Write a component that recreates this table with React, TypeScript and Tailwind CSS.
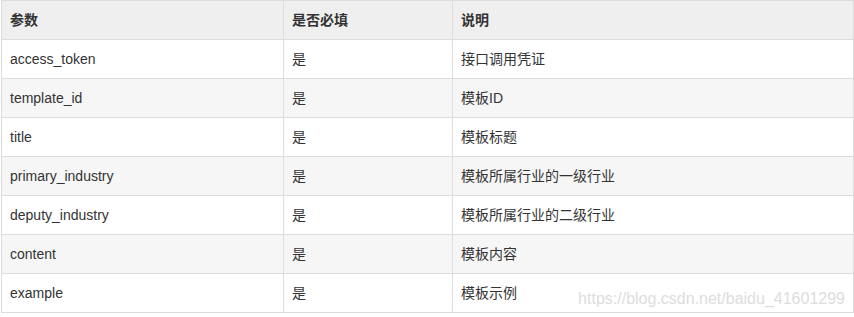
const rows = [
  { name: "access_token", required: "是", desc: "接口调用凭证" },
  { name: "template_id", required: "是", desc: "模板ID" },
  { name: "title", required: "是", desc: "模板标题" },
  { name: "primary_industry", required: "是", desc: "模板所属行业的一级行业" },
  { name: "deputy_industry", required: "是", desc: "模板所属行业的二级行业" },
  { name: "content", required: "是", desc: "模板内容" },
  { name: "example", required: "是", desc: "模板示例" },
];

export default function App() {
  return (
    <div
      className="relative h-[317px] w-[854px] bg-white pl-px text-[14px] text-[#333]"
      style={{ fontFamily: '"Liberation Sans", "Noto Sans CJK SC", sans-serif' }}
    >
      <table className="w-[852px] table-fixed border-collapse">
        <colgroup>
          <col className="w-[282px]" />
          <col className="w-[169px]" />
          <col className="w-[401px]" />
        </colgroup>
        <thead>
          <tr className="bg-[#efefef]">
            <th className="h-[39px] border border-[#ddd] px-[8px] text-left font-bold">参数</th>
            <th className="h-[39px] border border-[#ddd] px-[8px] text-left font-bold">是否必填</th>
            <th className="h-[39px] border border-[#ddd] px-[8px] text-left font-bold">说明</th>
          </tr>
        </thead>
        <tbody>
          {rows.map((r, i) => (
            <tr key={r.name} className={i % 2 === 0 ? "bg-white" : "bg-[#f6f6f6]"}>
              <td className="h-[39px] border border-[#ddd] px-[8px]">{r.name}</td>
              <td className="h-[39px] border border-[#ddd] px-[8px]">{r.required}</td>
              <td className="h-[39px] border border-[#ddd] px-[8px]">{r.desc}</td>
            </tr>
          ))}
        </tbody>
      </table>

      {/* watermark */}
      <div className="absolute right-[9px] top-[287px] text-[16px] text-[#ddd]">
        https://blog.csdn.net/baidu_41601299
      </div>
    </div>
  );
}
